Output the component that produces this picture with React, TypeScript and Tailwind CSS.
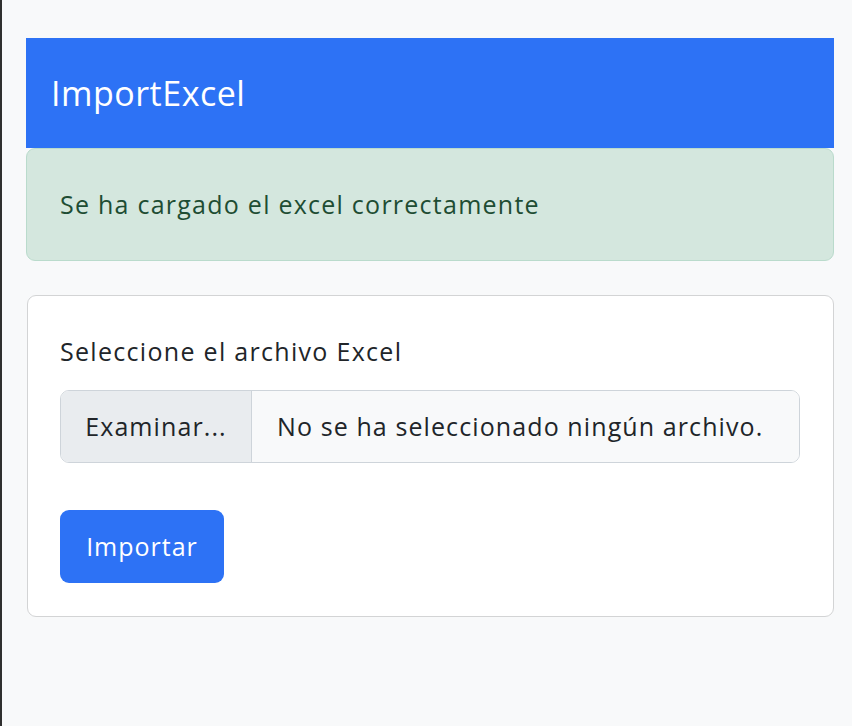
export default function App() {
  return (
    <div className="min-h-screen bg-[#f8f9fa] border-l-2 border-[#2f2f2f] pl-6 pr-[18px] pt-[38px] font-['Open_Sans','Noto_Sans',sans-serif]">
      {/* Header */}
      <div className="h-[110px] bg-[#2d72f5] flex items-center pl-[25px]">
        <h1 className="text-[34px] tracking-[0.5px] text-white leading-none">ImportExcel</h1>
      </div>

      {/* Alert */}
      <div className="h-[113px] bg-[#d4e7de] border border-[#badbcc] rounded-[9px] flex items-center px-[33px]">
        <p className="text-[25px] tracking-[1.25px] text-[#1e4d33]">Se ha cargado el excel correctamente</p>
      </div>

      {/* Card */}
      <div className="mt-[34px] ml-px bg-white border border-[#d3d4d5] rounded-[9px] pl-[32px] pr-[33px] pt-[37px] pb-[33px]">
        <label className="block text-[25px] tracking-[1.3px] leading-[36px] text-[#212529]">
          Seleccione el archivo Excel
        </label>

        <div className="mt-[21px] h-[73px] flex border border-[#ced4da] rounded-[9px] overflow-hidden text-[25px] tracking-[1.1px] text-[#212529]">
          <div className="w-[191px] bg-[#e9ecef] border-r border-[#ced4da] flex items-center justify-center">
            Examinar...
          </div>
          <div className="flex-1 bg-[#f8f9fa] flex items-center pl-[25px]">
            No se ha seleccionado ningún archivo.
          </div>
        </div>

        <button className="mt-[47px] h-[73px] w-[164px] bg-[#2d72f5] text-white text-[25px] tracking-[1px] rounded-[9px] flex items-center justify-center">
          Importar
        </button>
      </div>
    </div>
  );
}
